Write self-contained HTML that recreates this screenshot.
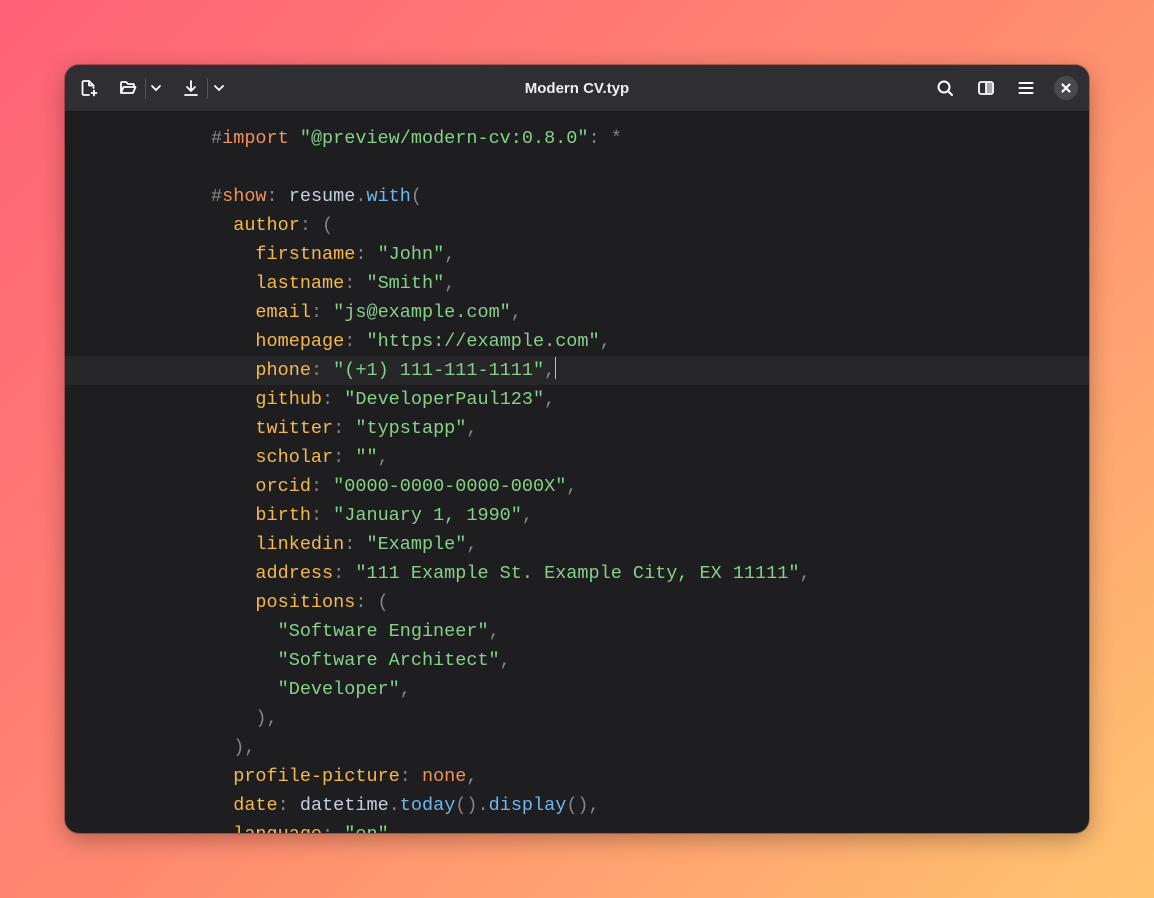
<!DOCTYPE html>
<html><head><meta charset="utf-8"><style>
html,body{margin:0;padding:0;width:1154px;height:898px;overflow:hidden}
body{background:linear-gradient(135deg,#ff6178 0%,#ff8a70 50%,#ffc470 100%);position:relative;font-family:"Liberation Sans",sans-serif}
.win{position:absolute;left:65px;top:65px;width:1024px;height:768px;border-radius:14px;overflow:hidden;background:#1e1e20;box-shadow:0 6px 24px rgba(0,0,0,.3),0 0 0 1px rgba(0,0,0,.25)}
.tb{position:absolute;left:0;top:0;right:0;height:46px;background:#2e2e33;border-bottom:1px solid #18181a;z-index:2}
.title{position:absolute;left:0;right:0;top:15px;text-align:center;color:#eee;font-weight:bold;font-size:15px}
.ic{position:absolute;top:13px}
.sep{position:absolute;top:13px;width:1px;height:21px;background:#555}
.close{position:absolute;left:989px;top:11px;width:24px;height:24px;border-radius:12px;background:#48484d}
.code{position:absolute;left:0;top:59px;right:0;font-family:"Liberation Mono",monospace;font-size:18.5px;line-height:29px;color:#c5cfe0}
.l{padding-left:146px;height:29px;white-space:pre}
.hl{background:#27272a}
.k{color:#f0915e}.s{color:#86d08a}.y{color:#f5b84c}.f{color:#6cb8ef}.p{color:#858589}.h{color:#888}
.cur{display:inline-block;width:1px;height:22px;background:#bbb;vertical-align:-4px}
</style></head><body>
<div class="win">
<div class="tb">
 <svg class="ic" style="left:14px" width="20" height="20" viewBox="0 0 20 20" fill="none" stroke="#fff" stroke-width="1.8" stroke-linecap="round" stroke-linejoin="round"><path d="M10 17H5a1.5 1.5 0 0 1-1.5-1.5v-11A1.5 1.5 0 0 1 5 3h5l4.5 4.5V10"/><path d="M10 3v4.5h4.5"/><path d="M15 12.5v5M12.5 15h5"/></svg>
 <svg class="ic" style="left:53px" width="20" height="20" viewBox="0 0 20 20" fill="none" stroke="#fff" stroke-width="1.8" stroke-linejoin="round"><path d="M3 15V5a1 1 0 0 1 1-1h4l2 2h5a1 1 0 0 1 1 1v2"/><path d="M3 15l2.5-6h12l-2.5 6z"/></svg>
 <div class="sep" style="left:80px"></div>
 <svg class="ic" style="left:83px" width="16" height="20" viewBox="0 0 16 20" fill="none" stroke="#fff" stroke-width="1.8" stroke-linecap="round"><path d="M4 8l4 4 4-4"/></svg>
 <svg class="ic" style="left:116px" width="20" height="20" viewBox="0 0 20 20" fill="none" stroke="#fff" stroke-width="1.8" stroke-linecap="round" stroke-linejoin="round"><path d="M10 3v10M6 9l4 4 4-4M4 17h12"/></svg>
 <div class="sep" style="left:142px"></div>
 <svg class="ic" style="left:146px" width="16" height="20" viewBox="0 0 16 20" fill="none" stroke="#fff" stroke-width="1.8" stroke-linecap="round"><path d="M4 8l4 4 4-4"/></svg>
 <div class="title">Modern CV.typ</div>
 <svg class="ic" style="left:870px" width="20" height="20" viewBox="0 0 20 20" fill="none" stroke="#fff" stroke-width="2" stroke-linecap="round"><circle cx="9" cy="9" r="5.5"/><path d="M13 13l4 4"/></svg>
 <svg class="ic" style="left:911px" width="20" height="20" viewBox="0 0 20 20"><rect x="3" y="4" width="14" height="12" rx="2" fill="none" stroke="#fff" stroke-width="1.8"/><rect x="10" y="5" width="6" height="10" fill="#aaa"/><path d="M10 4v12" stroke="#fff" stroke-width="1.8"/></svg>
 <svg class="ic" style="left:951px" width="20" height="20" viewBox="0 0 20 20" stroke="#fff" stroke-width="2" stroke-linecap="round"><path d="M3.5 5h13M3.5 10h13M3.5 15h13"/></svg>
 <div class="close"><svg width="24" height="24" viewBox="0 0 24 24" stroke="#fff" stroke-width="2.2" stroke-linecap="round"><path d="M8.5 8.5l7 7M15.5 8.5l-7 7"/></svg></div>
</div>
<div class="code"><div class="l"><span class="h">#</span><span class="k">import</span> <span class="s">"@preview/modern-cv:0.8.0"</span><span class="p">: *</span></div><div class="l"> </div><div class="l"><span class="h">#</span><span class="k">show</span><span class="p">:</span> resume<span class="p">.</span><span class="f">with</span><span class="p">(</span></div><div class="l">  <span class="y">author</span><span class="p">: (</span></div><div class="l">    <span class="y">firstname</span><span class="p">:</span> <span class="s">"John"</span><span class="p">,</span></div><div class="l">    <span class="y">lastname</span><span class="p">:</span> <span class="s">"Smith"</span><span class="p">,</span></div><div class="l">    <span class="y">email</span><span class="p">:</span> <span class="s">"js@example.com"</span><span class="p">,</span></div><div class="l">    <span class="y">homepage</span><span class="p">:</span> <span class="s">"https://example.com"</span><span class="p">,</span></div><div class="l hl">    <span class="y">phone</span><span class="p">:</span> <span class="s">"(+1) 111-111-1111"</span><span class="p">,</span><span class="cur"></span></div><div class="l">    <span class="y">github</span><span class="p">:</span> <span class="s">"DeveloperPaul123"</span><span class="p">,</span></div><div class="l">    <span class="y">twitter</span><span class="p">:</span> <span class="s">"typstapp"</span><span class="p">,</span></div><div class="l">    <span class="y">scholar</span><span class="p">:</span> <span class="s">""</span><span class="p">,</span></div><div class="l">    <span class="y">orcid</span><span class="p">:</span> <span class="s">"0000-0000-0000-000X"</span><span class="p">,</span></div><div class="l">    <span class="y">birth</span><span class="p">:</span> <span class="s">"January 1, 1990"</span><span class="p">,</span></div><div class="l">    <span class="y">linkedin</span><span class="p">:</span> <span class="s">"Example"</span><span class="p">,</span></div><div class="l">    <span class="y">address</span><span class="p">:</span> <span class="s">"111 Example St. Example City, EX 11111"</span><span class="p">,</span></div><div class="l">    <span class="y">positions</span><span class="p">: (</span></div><div class="l">      <span class="s">"Software Engineer"</span><span class="p">,</span></div><div class="l">      <span class="s">"Software Architect"</span><span class="p">,</span></div><div class="l">      <span class="s">"Developer"</span><span class="p">,</span></div><div class="l">    <span class="p">),</span></div><div class="l">  <span class="p">),</span></div><div class="l">  <span class="y">profile-picture</span><span class="p">:</span> <span class="k">none</span><span class="p">,</span></div><div class="l">  <span class="y">date</span><span class="p">:</span> datetime<span class="p">.</span><span class="f">today</span><span class="p">().</span><span class="f">display</span><span class="p">(),</span></div><div class="l">  <span class="y">language</span><span class="p">:</span> <span class="s">"en"</span><span class="p">,</span></div></div>
</div>
</body></html>
